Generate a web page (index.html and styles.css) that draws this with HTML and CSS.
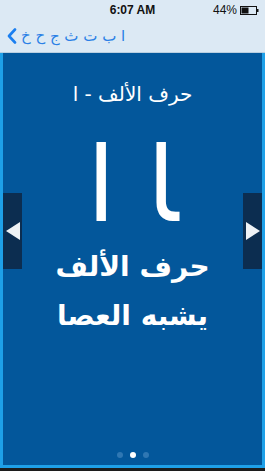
FILE: index.html
```html
<!DOCTYPE html>
<html lang="ar">
<head>
<meta charset="UTF-8">
<meta name="viewport" content="width=device-width, initial-scale=1.0">
<title>حرف الألف</title>
<link rel="stylesheet" href="styles.css">
</head>
<body>

<div class="screen">
  <div class="status">
    <span class="time">6:07 AM</span>
    <span class="battery">
      44%
      <svg width="19" height="9" viewBox="0 0 19 9">
        <rect x="0.5" y="0.5" width="16" height="8" fill="none" stroke="#111" stroke-width="1"/>
        <rect x="1.5" y="1.5" width="7" height="6" fill="#111"/>
        <rect x="17" y="3" width="1.5" height="3" fill="#111"/>
      </svg>
    </span>
  </div>

  <div class="nav">
    <svg class="back" width="10" height="16" viewBox="0 0 10 16">
      <polyline points="8,1.5 2,8 8,14.5" fill="none" stroke="#1b7ff0" stroke-width="2.6" stroke-linecap="round" stroke-linejoin="round"/>
    </svg>
    <span class="letters" dir="rtl">ا ب ت ث ج ح خ</span>
  </div>

  <div class="card">
    <div class="title" dir="rtl">حرف الألف - ا</div>
    <div class="big" dir="rtl">ﺎ ا</div>
    <div class="desc" dir="rtl">حرف الألف<br>يشبه العصا</div>

    <div class="dots">
      <span class="dot"></span>
      <span class="dot on"></span>
      <span class="dot"></span>
    </div>

    <!-- side arrows sit over the card -->
    <div class="arrow prev"><span class="tri-left"></span></div>
    <div class="arrow next"><span class="tri-right"></span></div>
  </div>

  <div class="bottom-line"></div>
</div>

</body>
</html>
```

FILE: styles.css
```css
body {
  margin: 0;
  font-family: "DejaVu Sans", sans-serif;
  background-color: #1c1c1c;
}
.screen {
  width: 265px;
  height: 471px;
  display: flex;
  flex-direction: column;
  overflow: hidden;
}
.status {
  height: 20px;
  background-color: #dce9f4;
  position: relative;
  font-family: "Liberation Sans", Arial, sans-serif;
  font-size: 12px;
  color: #111;
}
.time {
  position: absolute;
  left: 0;
  right: 0;
  top: 3px;
  text-align: center;
  font-weight: bold;
}
.battery {
  position: absolute;
  right: 6px;
  top: 3px;
  display: flex;
  align-items: center;
  gap: 3px;
}
.nav {
  height: 32px;
  background-color: #dce9f4;
  border-bottom: 1px solid #b9cfe0;
  display: flex;
  align-items: center;
  padding-left: 7px;
  gap: 4px;
}
.back {
  display: block;
}
.letters {
  font-size: 15px;
  color: #2a80e6;
  letter-spacing: 1.5px;
}
.card {
  flex: 1;
  position: relative;
  background-color: #03579b;
  border: 3px solid #1ea0e8;
  border-top: none;
  color: #fff;
  text-align: center;
  display: flex;
  flex-direction: column;
  align-items: center;
}
.title {
  margin-top: 29px;
  font-size: 20px;
  line-height: 24px;
}
.big {
  margin-top: 24px;
  font-size: 104px;
  line-height: 110px;
  word-spacing: -2px;
}
.desc {
  margin-top: 2px;
  font-size: 28px;
  line-height: 49px;
  font-weight: bold;
}
.dots {
  margin-top: auto;
  margin-bottom: 7px;
  display: flex;
  gap: 7px;
  align-items: center;
}
.dot {
  width: 6px;
  height: 6px;
  border-radius: 50%;
  background-color: #2f77b3;
}
.dot.on {
  background-color: #fff;
}
.arrow {
  position: absolute;
  top: 140px;
  width: 19px;
  height: 76px;
  background-color: #0c2d50;
  display: flex;
  align-items: center;
  justify-content: center;
}
.arrow.prev {
  left: 0;
}
.arrow.next {
  right: 0;
}
.tri-left {
  width: 0;
  height: 0;
  border-top: 9px solid transparent;
  border-bottom: 9px solid transparent;
  border-right: 14px solid #eef2f6;
}
.tri-right {
  width: 0;
  height: 0;
  border-top: 9px solid transparent;
  border-bottom: 9px solid transparent;
  border-left: 14px solid #eef2f6;
}
.bottom-line {
  height: 3px;
  background-color: #1c1c1c;
}
```
